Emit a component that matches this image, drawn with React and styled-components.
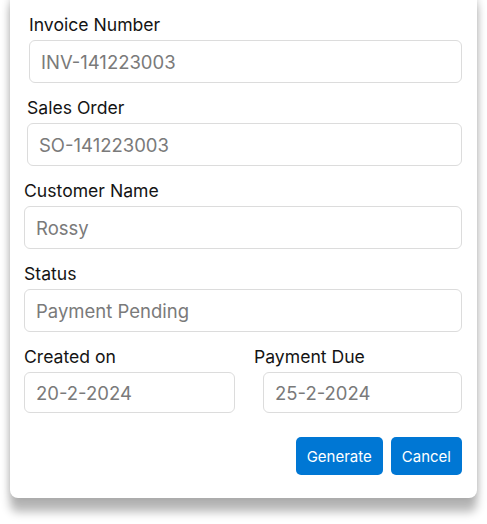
import styled, { createGlobalStyle } from 'styled-components';

const GlobalStyle = createGlobalStyle`
  html, body {
    margin: 0;
    min-height: 100%;
    background: #ffffff;
    font-family: Inter, "Noto Sans", sans-serif;
  }
  #root {
    padding-bottom: 30px;
  }
`;

const App = () => {
  return (
    <>
      <GlobalStyle />
      <Card>
        <Field $inset={5}>
          <Label>Invoice Number</Label>
          <Input placeholder="INV-141223003" />
        </Field>
        <Field $inset={3}>
          <Label>Sales Order</Label>
          <Input placeholder="SO-141223003" />
        </Field>
        <Field>
          <Label>Customer Name</Label>
          <Input placeholder="Rossy" />
        </Field>
        <Field>
          <Label>Status</Label>
          <Input placeholder="Payment Pending" />
        </Field>
        <DateRow>
          <Field>
            <Label>Created on</Label>
            <Input $short placeholder="20-2-2024" />
          </Field>
          <Field>
            <Label>Payment Due</Label>
            <Input $short $offset={9} placeholder="25-2-2024" />
          </Field>
        </DateRow>
        <Actions>
          <Button>Generate</Button>
          <Button>Cancel</Button>
        </Actions>
      </Card>
    </>
  );
};

const Card = styled.div`
  margin: -12px 10px 0;
  padding: 27px 15px 23px 14px;
  background: #ffffff;
  border-radius: 8px;
  box-shadow: 0 1px 8px rgba(0, 0, 0, 0.12), 0 14px 10px rgba(0, 0, 0, 0.28);
  display: flex;
  flex-direction: column;
  gap: 15px;
`;

const Field = styled.div`
  display: flex;
  flex-direction: column;
  gap: 5px;
  padding-left: ${(p) => p.$inset || 0}px;
  min-width: 0;
`;

const Label = styled.label`
  font-size: 17.6px;
  line-height: 20px;
  color: #141414;
`;

const Input = styled.input`
  box-sizing: border-box;
  width: ${(p) => (p.$offset ? `calc(100% - ${p.$offset}px)` : '100%')};
  margin-left: ${(p) => p.$offset || 0}px;
  height: ${(p) => (p.$short ? 41 : 43)}px;
  padding: 0 11px;
  border: 1px solid #dcdcdc;
  border-radius: 6px;
  font-family: Inter, "Noto Sans", sans-serif;
  font-size: 18.5px;
  color: #333;
  background: #fff;
  outline: none;

  &::placeholder {
    color: #7a7a7a;
  }
`;

const DateRow = styled.div`
  display: grid;
  grid-template-columns: 211px 1fr;
  gap: 19px;
`;

const Actions = styled.div`
  display: flex;
  justify-content: flex-end;
  gap: 8px;
  margin-top: 9px;
`;

const Button = styled.button`
  height: 38px;
  padding: 0 11px;
  border: none;
  border-radius: 5px;
  background: #0077d4;
  color: #ffffff;
  font-family: Inter, "Noto Sans", sans-serif;
  font-size: 15px;
  cursor: pointer;
`;

export default App;
